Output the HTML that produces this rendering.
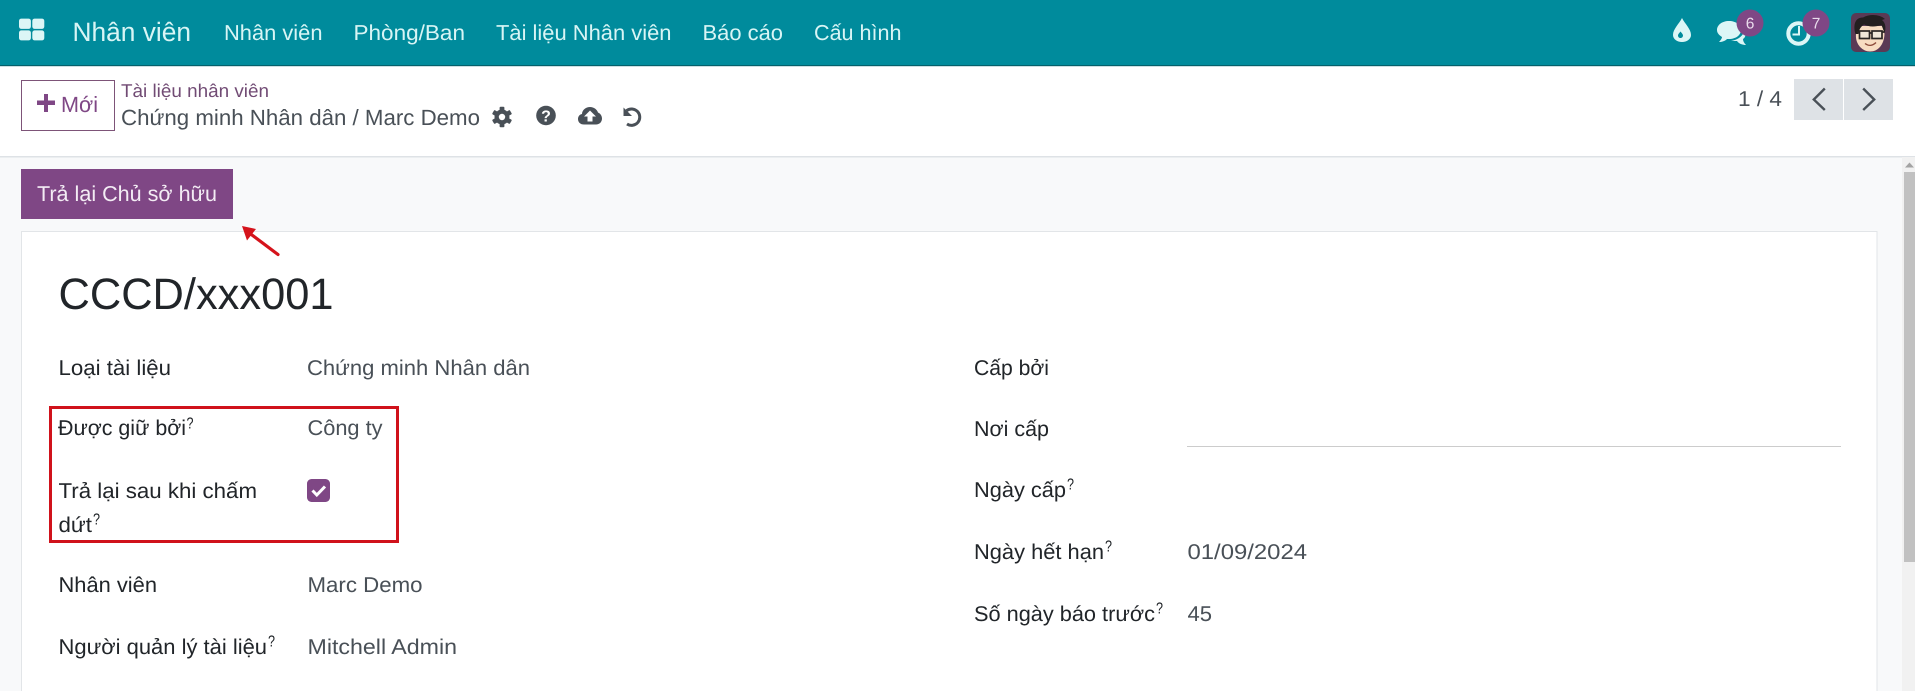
<!DOCTYPE html>
<html lang="vi">
<head>
<meta charset="utf-8">
<title>Nhân viên</title>
<style>
html,body{margin:0;padding:0;width:1915px;height:691px;overflow:hidden;background:#f8f9fa}
svg{display:block}
text{font-family:"Liberation Sans","Noto Sans CJK SC",sans-serif;text-rendering:geometricPrecision}
.m{font-size:21.6px;fill:#d8f5f5}
.l{font-size:21.4px;fill:#212529}
.v{font-size:21.4px;fill:#495057}
.s{font-size:16px;fill:#212529}
</style>
</head>
<body>
<svg width="1915" height="691" viewBox="0 0 1915 691" xmlns="http://www.w3.org/2000/svg">
  <!-- backgrounds -->
  <rect width="1915" height="691" fill="#f8f9fa"/>
  <rect width="1915" height="156" y="0" fill="#fff"/>
  <rect y="156" width="1915" height="1.5" fill="#dee2e6"/>
  <rect width="1915" height="65" fill="#008b9c"/>
  <rect y="65" width="1915" height="1.2" fill="#04606b"/>

  <!-- apps icon -->
  <g fill="#dcf6f6">
    <rect x="19" y="18.6" width="11.9" height="10.3" rx="2.4"/>
    <rect x="32.3" y="18.6" width="12" height="10.3" rx="2.4"/>
    <rect x="19" y="30.4" width="11.9" height="10" rx="2.4"/>
    <rect x="32.3" y="30.4" width="12" height="10" rx="2.4"/>
  </g>

  <text x="72.5" y="41" font-size="26.5px" fill="#d8f5f5" textLength="118.5" lengthAdjust="spacingAndGlyphs">Nhân viên</text>
  <text class="m" x="224" y="40" textLength="98.5" lengthAdjust="spacingAndGlyphs">Nhân viên</text>
  <text class="m" x="353.5" y="40" textLength="111.5" lengthAdjust="spacingAndGlyphs">Phòng/Ban</text>
  <text class="m" x="496" y="40" textLength="175.5" lengthAdjust="spacingAndGlyphs">Tài liệu Nhân viên</text>
  <text class="m" x="702.5" y="40" textLength="80.5" lengthAdjust="spacingAndGlyphs">Báo cáo</text>
  <text class="m" x="814" y="40" textLength="87.5" lengthAdjust="spacingAndGlyphs">Cấu hình</text>

  <!-- droplet -->
  <path d="M1682 18 C1685 24 1691 29 1691 35 C1691 39 1687 42 1682 42 C1677 42 1673 39 1673 35 C1673 29 1679 24 1682 18Z" fill="#dcf6f6"/>
  <path d="M1680.5 31.5 C1681.5 33 1683 34 1683 35.5 C1683 37 1681.7 38 1680.5 38 C1679.2 38 1678 37 1678 35.5 C1678 34 1679.5 33 1680.5 31.5Z" fill="#008b9c"/>
  <!-- chat bubbles -->
  <path d="M1729 21 C1736 21 1741 25 1741 30 C1741 35 1736 39 1729 39 L1727 39 C1725 41 1722 42 1719 42 C1721 40 1722 38 1722 37 C1719 35 1717 33 1717 30 C1717 25 1722 21 1729 21Z" fill="#dcf6f6"/>
  <path d="M1744 32 C1746 34 1746 37 1743 39 C1743 41 1744 43 1746 45 C1743 45 1739 44 1737 41 L1731 41 C1737 40 1742 37 1744 32Z" fill="#dcf6f6"/>
  <!-- clock -->
  <circle cx="1798.5" cy="33.5" r="10.2" fill="none" stroke="#dcf6f6" stroke-width="4"/>
  <path d="M1799 26V34.5H1792.5" fill="none" stroke="#dcf6f6" stroke-width="2"/>
  <!-- badges -->
  <circle cx="1750" cy="23" r="13.5" fill="#7f4785"/>
  <circle cx="1816" cy="23" r="13.5" fill="#7f4785"/>
  <text x="1750" y="28.5" font-size="15.5px" fill="#eadcec" text-anchor="middle">6</text>
  <text x="1816" y="28.5" font-size="15.5px" fill="#eadcec" text-anchor="middle">7</text>

  <!-- avatar -->
  <rect x="1851" y="13" width="39" height="39" rx="5" fill="#5a3a55"/>
  <path d="M1856 34 C1855 45 1863 51.5 1870 51.5 C1878 51.5 1884 45 1884.5 34 L1883 26 L1858 26Z" fill="#f7dcc2"/>
  <path d="M1855.5 34 C1852.5 24 1856 17 1863 17.5 C1870 13.5 1880 14.5 1885 19 L1882 20 C1886 23 1886 29 1884.5 33 L1881.5 25 C1874 27.5 1868 26.5 1864 24.5 C1861 26.5 1859 29 1858.5 34Z" fill="#231f20"/>
  <g fill="none" stroke="#2a2624" stroke-width="1.7">
    <rect x="1859.5" y="31" width="10" height="7.5" fill="#efe6d8"/>
    <rect x="1872" y="31" width="10" height="7.5" fill="#efe6d8"/>
    <path d="M1869.5 33H1872M1857 32H1859.5M1882 32H1884.5"/>
  </g>
  <path d="M1865 43.5 C1869 46.5 1873 45.5 1876 42.5" fill="none" stroke="#8d4b3b" stroke-width="1.4"/>

  <!-- new button -->
  <rect x="21.5" y="80.5" width="93" height="50" fill="#fff" stroke="#7d5478" stroke-width="1"/>
  <path d="M37 100.5H44V94H48V100.5H55V105H48V112H44V105H37Z" fill="#7f4785"/>
  <text x="61" y="112" font-size="22px" fill="#7f4785" textLength="37" lengthAdjust="spacingAndGlyphs">Mới</text>

  <!-- breadcrumb -->
  <text x="121" y="97" font-size="18.5px" fill="#714b74" textLength="148" lengthAdjust="spacingAndGlyphs">Tài liệu nhân viên</text>
  <text x="121" y="125" font-size="22px" fill="#495057" textLength="359" lengthAdjust="spacingAndGlyphs">Chứng minh Nhân dân / Marc Demo</text>

  <!-- gear -->
  <g transform="translate(502 117)" fill="#495057">
    <circle r="7.5"/>
    <rect x="-2.4" y="-10.2" width="4.8" height="20.4" rx="1"/>
    <rect x="-2.4" y="-10.2" width="4.8" height="20.4" rx="1" transform="rotate(60)"/>
    <rect x="-2.4" y="-10.2" width="4.8" height="20.4" rx="1" transform="rotate(120)"/>
    <circle r="3.2" fill="#fff"/>
  </g>
  <!-- question -->
  <circle cx="546" cy="115.5" r="9.8" fill="#495057"/>
  <text x="546" y="121.5" font-size="16px" font-weight="700" fill="#fff" text-anchor="middle">?</text>
  <!-- cloud -->
  <path d="M584 124.5 C580 124.5 578 122 578 119 C578 116.5 579.5 114.5 582 114 C582 110 586 107 590 107 C594 107 597 109.5 598 112.5 C600.5 113.5 602 116 602 118.5 C602 122 599.5 124.5 596 124.5Z" fill="#495057"/>
  <path d="M590 110.5 L596 116.5H592.5V121.5H587.5V116.5H584Z" fill="#fff"/>
  <!-- undo -->
  <path d="M626.5 110.7 A8.2 8.2 0 1 1 627 124" fill="none" stroke="#495057" stroke-width="3"/>
  <path d="M623.5 107.5V116H632Z" fill="#495057"/>

  <!-- pager -->
  <text x="1738" y="106" font-size="21.5px" fill="#495057" textLength="44" lengthAdjust="spacingAndGlyphs">1 / 4</text>
  <rect x="1794" y="79" width="49" height="41" fill="#dee2e6"/>
  <rect x="1844" y="79" width="49" height="41" fill="#dee2e6"/>
  <path d="M1824.8 88.5 L1813.8 99.5 L1824.8 110" fill="none" stroke="#495057" stroke-width="2.4"/>
  <path d="M1863.2 88.5 L1874.2 99.5 L1863.2 110" fill="none" stroke="#495057" stroke-width="2.4"/>

  <!-- return button -->
  <rect x="21" y="169" width="212" height="50" fill="#7f4785"/>
  <text x="37" y="201" font-size="21.5px" fill="#f3ecf4" textLength="180" lengthAdjust="spacingAndGlyphs">Trả lại Chủ sở hữu</text>

  <!-- card -->
  <rect x="21.5" y="231.5" width="1855.5" height="470" fill="#fff" stroke="#e2e5e8" stroke-width="1"/>

  <!-- arrow -->
  <path d="M278 254.5 L248 232" stroke="#d5131b" stroke-width="3.2" stroke-linecap="round" fill="none"/>
  <path d="M242 226 L256 229 L247 240.5Z" fill="#d5131b"/>

  <!-- title -->
  <text x="58.5" y="309" font-size="44px" fill="#212529" textLength="275" lengthAdjust="spacingAndGlyphs">CCCD/xxx001</text>

  <!-- left column -->
  <text class="l" x="58.5" y="375" textLength="112.5" lengthAdjust="spacingAndGlyphs">Loại tài liệu</text>
  <text class="v" x="307" y="375" textLength="223" lengthAdjust="spacingAndGlyphs">Chứng minh Nhân dân</text>

  <text class="l" x="58" y="435" textLength="128" lengthAdjust="spacingAndGlyphs">Được giữ bởi</text>
  <text class="s" x="186.5" y="428.5" textLength="7" lengthAdjust="spacingAndGlyphs">?</text>
  <text class="v" x="307.5" y="435" textLength="75" lengthAdjust="spacingAndGlyphs">Công ty</text>

  <text class="l" x="58.5" y="498" textLength="198.5" lengthAdjust="spacingAndGlyphs">Trả lại sau khi chấm</text>
  <text class="l" x="58.5" y="532" textLength="33.5" lengthAdjust="spacingAndGlyphs">dứt</text>
  <text class="s" x="93" y="524.5" textLength="7" lengthAdjust="spacingAndGlyphs">?</text>
  <rect x="307" y="479" width="23" height="23" rx="4.5" fill="#7f4785"/>
  <path d="M312.5 490.5 L316.8 495 L325 486.5" fill="none" stroke="#fff" stroke-width="3"/>

  <text class="l" x="58.5" y="592" textLength="98.5" lengthAdjust="spacingAndGlyphs">Nhân viên</text>
  <text class="v" x="307.5" y="592" textLength="115" lengthAdjust="spacingAndGlyphs">Marc Demo</text>

  <text class="l" x="58.5" y="654" textLength="208.5" lengthAdjust="spacingAndGlyphs">Người quản lý tài liệu</text>
  <text class="s" x="268" y="646.5" textLength="7" lengthAdjust="spacingAndGlyphs">?</text>
  <text class="v" x="307.5" y="654" textLength="149.5" lengthAdjust="spacingAndGlyphs">Mitchell Admin</text>

  <!-- red highlight -->
  <rect x="50.5" y="407.5" width="347" height="134" fill="none" stroke="#d0121b" stroke-width="3"/>

  <!-- right column -->
  <text class="l" x="974" y="375" textLength="75" lengthAdjust="spacingAndGlyphs">Cấp bởi</text>
  <text class="l" x="974" y="436" textLength="75" lengthAdjust="spacingAndGlyphs">Nơi cấp</text>
  <rect x="1187" y="446" width="654" height="1" fill="#cccccc"/>
  <text class="l" x="974" y="497" textLength="92" lengthAdjust="spacingAndGlyphs">Ngày cấp</text>
  <text class="s" x="1067" y="489.5" textLength="7" lengthAdjust="spacingAndGlyphs">?</text>
  <text class="l" x="974" y="559" textLength="130" lengthAdjust="spacingAndGlyphs">Ngày hết hạn</text>
  <text class="s" x="1105" y="551.5" textLength="7" lengthAdjust="spacingAndGlyphs">?</text>
  <text class="v" x="1187.5" y="559" textLength="119.5" lengthAdjust="spacingAndGlyphs">01/09/2024</text>
  <text class="l" x="974" y="621" textLength="181" lengthAdjust="spacingAndGlyphs">Số ngày báo trước</text>
  <text class="s" x="1156" y="613.5" textLength="7" lengthAdjust="spacingAndGlyphs">?</text>
  <text class="v" x="1187.5" y="621" textLength="24.5" lengthAdjust="spacingAndGlyphs">45</text>

  <!-- scrollbar -->
  <rect x="1902" y="157" width="13" height="534" fill="#f1f1f1"/>
  <path d="M1905 167.5 L1909.5 162.5 L1914 167.5Z" fill="#a3a3a3"/>
  <rect x="1904" y="172" width="11" height="390" fill="#c1c1c1"/>
</svg>
</body>
</html>
